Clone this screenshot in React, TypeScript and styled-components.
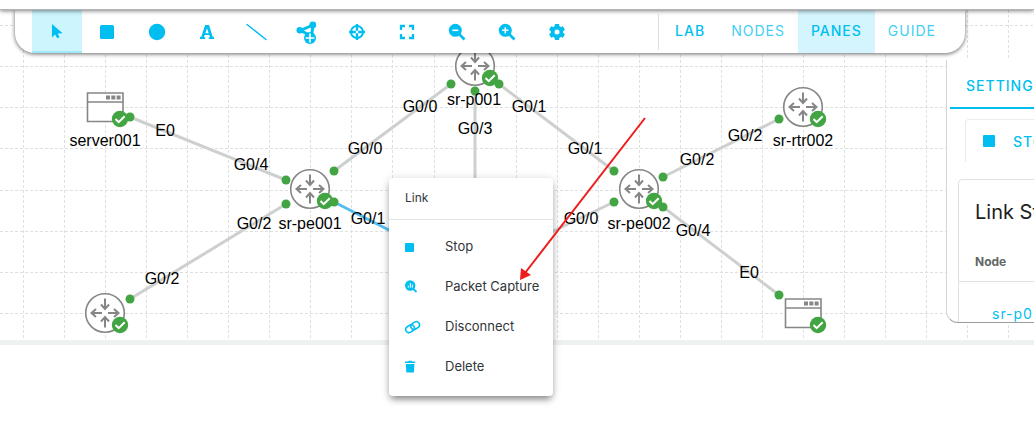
import React from "react";
import styled, { createGlobalStyle, css } from "styled-components";

const accent = "#00bff0";
const green = "#43a443";
const steel = "#868686";

const GlobalStyle = createGlobalStyle`
  * { box-sizing: border-box; }
  body {
    margin: 0;
    background: #fff;
    color: #1c1e20;
    font-family: Inter, "Liberation Sans", sans-serif;
    overflow-x: hidden;
  }
  button { font: inherit; border: 0; background: none; padding: 0; cursor: pointer; }
`;

const Page = styled.main`
  display: flex;
  flex-direction: column;
`;

const TopStrip = styled.header`
  height: 10px;
  background: #fff;
  border-bottom: 1px solid #b4b4b4;
  box-shadow: 0 1px 4px rgba(0, 0, 0, 0.5);
  position: relative;
  z-index: 2;
`;

const Workbench = styled.section`
  position: relative;
  overflow: hidden;
  height: 335px;
  border-bottom: 5px solid #edf2f1;
`;

const Topology = styled.svg`
  position: absolute;
  inset: 0;
  width: 100%;
  height: 100%;
  font-family: "Liberation Sans", Arial, sans-serif;
  font-size: 16px;
`;

const Toolbar = styled.nav`
  position: relative;
  display: flex;
  justify-content: space-between;
  height: 43px;
  margin: 0 69px 0 15px;
  padding: 0 16px 0 17px;
  background: #fff;
  border-radius: 0 0 20px 20px;
  box-shadow: 0 1px 4px rgba(0, 0, 0, 0.6);
`;

const Group = styled.div`
  display: flex;
`;

const TabGroup = styled(Group)`
  &::before {
    content: "";
    width: 1px;
    margin: 4px 3px 3px 0;
    background: #dcdfdf;
  }
`;

const ToolButton = styled.button<{ $active?: boolean }>`
  width: 50px;
  display: flex;
  align-items: center;
  justify-content: center;
  color: ${accent};
  ${(p) => p.$active && css`
    background: #ccf5fe;
    border-bottom: 2px solid #a0e9f5;
  `}
`;

const Tab = styled.button<{ $active?: boolean; $strong?: boolean }>`
  padding: 0 13px 2px;
  color: ${(p) => (p.$strong ? accent : "#43cff2")};
  font-size: 14px;
  font-weight: ${(p) => (p.$strong ? 500 : 400)};
  letter-spacing: 1px;
  ${(p) => p.$active && css`background: #d4f5fd;`}
`;

const Pane = styled.aside`
  position: absolute;
  top: 50px;
  right: 0;
  width: 88px;
  height: 263px;
  overflow: hidden;
  background: #fff;
  border-left: 1px solid #d4d6d6;
  border-bottom: 1px solid #9a9c9c;
  border-bottom-left-radius: 12px;
  white-space: nowrap;
`;

const PaneBody = styled.div`
  width: 320px;
  padding-left: 3px;
`;

const PaneTab = styled.button`
  display: block;
  width: 100%;
  height: 49px;
  padding: 4px 0 0 16px;
  text-align: left;
  color: ${accent};
  font-size: 14px;
  font-weight: 500;
  letter-spacing: 1px;
  border-bottom: 2px solid ${accent};
`;

const StopButton = styled.button`
  display: flex;
  align-items: center;
  gap: 18px;
  width: 240px;
  height: 43px;
  margin: 10px 0 17px 15px;
  padding-left: 17px;
  color: ${accent};
  font-size: 14px;
  font-weight: 500;
  letter-spacing: 1px;
  border: 1px solid #ebeded;
  border-bottom: 0;
  border-radius: 4px 4px 0 0;
`;

const Card = styled.section`
  margin-left: 8px;
  border: 1px solid #e0e2e2;
  border-radius: 4px 4px 0 0;
`;

const CardTitle = styled.h2`
  margin: 0;
  padding: 18px 0 0 16px;
  font-size: 20px;
  line-height: 28px;
  font-weight: 400;
`;

const LinkTable = styled.table`
  width: 100%;
  margin-top: 16px;
  border-collapse: collapse;
  th {
    padding: 0 0 0 16px;
    height: 39px;
    text-align: left;
    font-size: 12px;
    font-weight: 700;
    color: #636666;
    border-bottom: 1px solid #e0e2e2;
  }
  td {
    padding: 0 0 0 33px;
    height: 64px;
    font-size: 14px;
    letter-spacing: 1px;
  }
  a { color: ${accent}; text-decoration: none; }
`;

const Menu = styled.div`
  position: absolute;
  left: 389px;
  top: 178px;
  z-index: 3;
  width: 164px;
  padding-bottom: 10px;
  background: #fff;
  border-radius: 4px;
  box-shadow: 0 5px 7px -2px rgba(0, 0, 0, 0.42), 0 1px 10px rgba(0, 0, 0, 0.16);
  color: #32363a;
  font-size: 13px;
`;

const MenuTitle = styled.div`
  height: 42px;
  padding-left: 16px;
  line-height: 40px;
  font-size: 12px;
  border-bottom: 1px solid #e2e4e4;
`;

const MenuItem = styled.button`
  display: grid;
  grid-template-columns: 40px 1fr;
  align-items: center;
  width: 100%;
  height: 40px;
  padding-left: 16px;
  text-align: left;
  white-space: nowrap;
  color: inherit;
  svg { color: ${accent}; display: block; }
`;

const MenuItems = styled.div`
  padding-top: 6px;
`;

const Arrow = styled.svg`
  position: absolute;
  left: 515px;
  top: 115px;
  z-index: 4;
  pointer-events: none;
`;

type IconProps = { size?: number; box?: string; children: React.ReactNode };
const Icon = ({ size = 20, box = "0 0 20 20", children }: IconProps) => (
  <svg width={size} height={size} viewBox={box} fill="currentColor" aria-hidden="true">{children}</svg>
);

const tools: { name: string; icon: React.ReactNode }[] = [
  { name: "Select", icon: <Icon><path d="M5 3v13.500l3.100-2.900 2.100 3.700 2.400-1-1.900-3.700 4.900-.4z" /></Icon> },
  { name: "Rectangle", icon: <Icon><rect x="3" y="3" width="14" height="14" rx="1.5" /></Icon> },
  { name: "Ellipse", icon: <Icon><circle cx="10" cy="10" r="8.2" /></Icon> },
  { name: "Text", icon: <Icon><path d="M8 3h4l3.700 11.800H17V17h-5.200v-1.800h1.200l-.7-2.200H7.700L7 15.200h1.200V17H3v-2.200h1.300L7.500 4.800H8zM10 6.200 8.400 11.200h3.200z" fillRule="evenodd" /></Icon> },
  { name: "Line", icon: <Icon size={22} box="0 0 22 22"><path d="M1 3.500 20 18.500" stroke="currentColor" strokeWidth="1.5" strokeLinecap="round" /></Icon> },
  {
    name: "Add link",
    icon: (
      <Icon size={24} box="0 0 24 24">
        <path d="M5.500 10.500 18 5 16.500 16Z" fill="none" stroke="currentColor" strokeWidth="3" />
        <circle cx="4.800" cy="10.300" r="3.300" /><circle cx="17.800" cy="5" r="3.400" />
        <circle cx="15" cy="18" r="6" />
        <path d="M15 13.600v8.800M10.600 18h8.800" stroke="#fff" strokeWidth="1.700" />
      </Icon>
    ),
  },
  {
    name: "Center",
    icon: (
      <Icon>
        <circle cx="10" cy="10" r="6" fill="none" stroke="currentColor" strokeWidth="2" />
        <path d="M10 2v6.800M10 11.200V18M2 10h6.800M11.200 10H18" stroke="currentColor" strokeWidth="2.400" />
      </Icon>
    ),
  },
  { name: "Fit", icon: <Icon><path d="M4 8V4h4M12 4h4v4M16 12v4h-4M8 16H4v-4" fill="none" stroke="currentColor" strokeWidth="2.3" /></Icon> },
  {
    name: "Zoom out",
    icon: <Icon><circle cx="8.3" cy="8.300" r="6.500" /><path d="m12 12 5.500 5.500" stroke="currentColor" strokeWidth="2.600" /><path d="M5.300 8.300h6" stroke="#fff" strokeWidth="1.500" /></Icon>,
  },
  {
    name: "Zoom in",
    icon: <Icon><circle cx="8.3" cy="8.300" r="6.500" /><path d="m12 12 5.500 5.500" stroke="currentColor" strokeWidth="2.600" /><path d="M5.200 8.300h6.200M8.300 5.200v6.200" stroke="#fff" strokeWidth="1.500" /></Icon>,
  },
  {
    name: "Settings",
    icon: (
      <Icon>
        <path d="M8 2h4l.5 2.3 1.2.7 2.2-.8 2 3.5-1.8 1.5v1.6l1.8 1.5-2 3.5-2.2-.8-1.2.7L12 18H8l-.5-2.3-1.2-.7-2.2.8-2-3.5 1.8-1.5V9.2L2.1 7.7l2-3.5 2.2.8L7.500 4.300z" />
        <circle cx="10" cy="10" r="2.500" fill="#fff" />
      </Icon>
    ),
  },
];

const menuItems: { label: string; icon: React.ReactNode }[] = [
  { label: "Stop", icon: <Icon size={16} box="0 0 16 16"><rect y="5" width="9" height="9" rx="1" /></Icon> },
  {
    label: "Packet Capture",
    icon: (
      <Icon size={16} box="0 0 16 16">
        <circle cx="5.200" cy="7.500" r="5.200" /><path d="m8.500 11 3 3" stroke="currentColor" strokeWidth="1.800" />
        <path d="M3.300 7.700v2M5.300 5v4.700M7.300 6.500v3.200" stroke="#fff" strokeWidth="1" />
      </Icon>
    ),
  },
  {
    label: "Disconnect",
    icon: (
      <Icon size={16} box="0 0 16 16">
        <g fill="none" stroke="currentColor" strokeWidth="1.600" transform="rotate(-32 7.500 9)">
          <rect x="0" y="6" width="9" height="6.400" rx="3.200" /><rect x="6" y="6" width="9" height="6.400" rx="3.200" />
        </g>
      </Icon>
    ),
  },
  { label: "Delete", icon: <Icon size={16} box="0 0 16 16"><path d="M0 3.500h3l.6-.8h3l.6.8h3V5H0zM.8 6h8.600l-.5 8.500H1.400z" /></Icon> },
];

type Link = [number, number, number, number, boolean?];
const links: Link[] = [
  [130, 117, 286, 180], [334, 171, 451, 84], [499, 84, 614, 171], [475, 91, 475, 260],
  [130, 299, 286, 204], [334, 202, 432, 252, true], [614, 202, 510, 252],
  [663, 177, 779, 119], [663, 207, 779, 295],
];

const labels: [number, number, string][] = [
  [105, 146, "server001"], [165, 136, "E0"], [251, 170, "G0/4"], [365, 154, "G0/0"],
  [420, 112, "G0/0"], [474, 105, "sr-p001"], [529, 112, "G0/1"], [475, 134, "G0/3"],
  [585, 154, "G0/1"], [254, 229, "G0/2"], [310, 229, "sr-pe001"], [368, 224, "G0/1"],
  [162, 284, "G0/2"], [581, 224, "G0/0"], [639, 229, "sr-pe002"], [693, 236, "G0/4"],
  [697, 165, "G0/2"], [745, 141, "G0/2"], [803, 146, "sr-rtr002"], [749, 278, "E0"],
];

const Check = ({ x, y }: { x: number; y: number }) => (
  <g transform={`translate(${x} ${y})`}>
    <circle r="8.200" fill={green} />
    <path d="m-4.500 0 3.200 3.200 6-6" fill="none" stroke="#fff" strokeWidth="2" />
  </g>
);

const Router = ({ x, y }: { x: number; y: number }) => (
  <g transform={`translate(${x} ${y})`}>
    <circle r="19.300" fill="#fff" stroke={steel} strokeWidth="1.600" />
    {[0, 180].map((a) => (
      <path key={a} transform={`rotate(${a})`} d="M0-14.500V-4M-4-8.500 0-4l4-4.500" fill="none" stroke={steel} strokeWidth="2" />
    ))}
    {[0, 180].map((a) => (
      <path key={a} transform={`rotate(${a})`} d="M3 0H13.500M9-4l4.500 4L9 4" fill="none" stroke={steel} strokeWidth="2" />
    ))}
    <Check x={15} y={12} />
  </g>
);

const Server = ({ x, y }: { x: number; y: number }) => (
  <g transform={`translate(${x} ${y})`}>
    <path d="M-17.500-14h35.500v28.500h-35.500zM-17.500-5H18" fill="#fff" stroke={steel} strokeWidth="1.600" />
    <path d="M1-11.500h4v4H1zM6.300-11.500h4v4h-4zM11.600-11.500h4v4h-4z" fill={steel} />
    <Check x={15} y={12} />
  </g>
);

const columns = Array.from({ length: 64 }, (_, i) => Math.round(23 + i * 41.05) + 0.5);
const rows = Array.from({ length: 8 }, (_, i) => Math.round(25 + i * 41.15) + 0.5);

export default function App() {
  return (
    <Page>
      <GlobalStyle />
      <TopStrip />
      <Workbench>
        <Topology role="img" aria-label="Lab topology">
          <g transform="translate(0 -10)">
            <g stroke="#dfe1e1" strokeDasharray="3 2">
              {columns.map((x) => <line key={x} x1={x} x2={x} y1="10" y2="340" />)}
              {rows.map((y) => <line key={y} x1="0" x2="100%" y1={y} y2={y} />)}
            </g>
            {links.map(([x1, y1, x2, y2, active]) => (
              <line key={`${x1}-${y1}`} x1={x1} y1={y1} x2={x2} y2={y2} stroke={active ? "#55bdf0" : "#cdd0cf"} strokeWidth="3" />
            ))}
            <Server x={105} y={107} />
            <Server x={803} y={313} />
            <Router x={475} y={66} />
            <Router x={310} y={189} />
            <Router x={639} y={189} />
            <Router x={803} y={107} />
            <Router x={105} y={313} />
            {links.flatMap(([x1, y1, x2, y2]) => [[x1, y1], [x2, y2]])
              .filter(([, y]) => y < 250 || y > 290)
              .map(([x, y]) => <circle key={`${x}-${y}`} cx={x} cy={y} r="4.500" fill={green} />)}
            <g textAnchor="middle" fill="#000">
              {labels.map(([x, y, text]) => <text key={`${x}-${y}`} x={x} y={y}>{text}</text>)}
            </g>
          </g>
        </Topology>

        <Toolbar aria-label="Lab tools">
          <Group>
            {tools.map((tool, i) => (
              <ToolButton key={tool.name} aria-label={tool.name} $active={i === 0}>{tool.icon}</ToolButton>
            ))}
          </Group>
          <TabGroup>
            <Tab $strong>LAB</Tab>
            <Tab>NODES</Tab>
            <Tab $strong $active>PANES</Tab>
            <Tab>GUIDE</Tab>
          </TabGroup>
        </Toolbar>

        <Pane>
          <PaneBody>
            <PaneTab>SETTINGS</PaneTab>
            <StopButton>
              <svg width="12" height="12" aria-hidden="true"><rect width="12" height="12" rx="1" fill={accent} /></svg>
              STOP
            </StopButton>
            <Card>
              <CardTitle>Link State</CardTitle>
              <LinkTable>
                <thead><tr><th>Node</th></tr></thead>
                <tbody><tr><td><a href="#sr-p001">sr-p001</a></td></tr></tbody>
              </LinkTable>
            </Card>
          </PaneBody>
        </Pane>
      </Workbench>

      <Menu aria-label="Link actions">
        <MenuTitle>Link</MenuTitle>
        <MenuItems>
          {menuItems.map((item) => (
            <MenuItem key={item.label}>{item.icon}<span>{item.label}</span></MenuItem>
          ))}
        </MenuItems>
      </Menu>

      <Arrow width="135" height="170" aria-hidden="true">
        <path d="M130 3 10 158" stroke="#ee1c1c" strokeWidth="2" />
        <path d="m5 165 1-12 10 7z" fill="#ee1c1c" />
      </Arrow>
    </Page>
  );
}
